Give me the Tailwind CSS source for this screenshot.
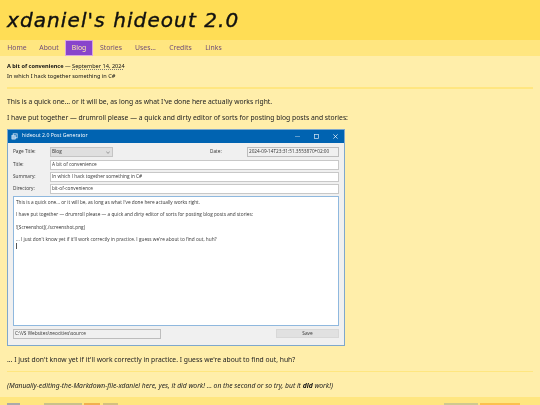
<!DOCTYPE html>
<html><head><meta charset="utf-8"><script src="https://cdn.jsdelivr.net/npm/@tailwindcss/browser@4"></script></head>
<body class="bg-[#ffeeaa] overflow-hidden font-['Noto_Sans',sans-serif] text-[#222]">
<div class="w-[540px] h-[405px] overflow-hidden flex flex-col blur-[0.3px]">
<header class="h-[40px] shrink-0 bg-[#ffdd55] pl-[7px] pt-[5px]"><h1 class="text-[#111] italic text-[20px] leading-[30px] tracking-[1.1px] [-webkit-text-stroke:0.4px_#111] font-['DejaVu_Sans',sans-serif] font-normal">xdaniel's hideout 2.0</h1></header>
<nav class="shrink-0 h-[16px] flex bg-[#ffe680] text-[6.8px] text-[#6f4d78] pl-[1px]">
<a class="w-[32px] flex items-center justify-center">Home</a>
<a class="w-[32px] flex items-center justify-center">About</a>
<a class="w-[28px] flex items-center justify-center bg-[#8844cc] text-[#ffeeaa] border border-[#d9a5e0]">Blog</a>
<a class="w-[36px] flex items-center justify-center">Stories</a>
<a class="w-[33px] flex items-center justify-center">Uses...</a>
<a class="w-[37px] flex items-center justify-center">Credits</a>
<a class="w-[29px] flex items-center justify-center">Links</a>
</nav>
<main class="flex-1 px-[7px] pt-[5px]">
<div class="text-[5.6px] leading-[10px] text-[#111]"><b class="font-bold">A bit of convenience</b> — <span class="underline decoration-dotted decoration-[#777]">September 14, 2024</span></div>
<div class="text-[5.6px] leading-[10px] text-[#111]">In which I hack together something in C#</div>
<hr class="border-0 h-[1.5px] bg-[#ffe680] mt-[6px] mb-[7px]">
<p class="text-[6.75px] leading-[12px] mb-[4px]">This is a quick one... or it will be, as long as what I've done here actually works right.</p>
<p class="text-[6.75px] leading-[12px] mb-[5px]">I have put together — drumroll please — a quick and dirty editor of sorts for posting blog posts and stories:</p>
<div class="w-[338px] h-[217px] bg-[#f0f0f0] border border-[#7fa8cc] flex flex-col font-['Open_Sans',sans-serif] text-[#333] text-[4.75px]">
<div class="h-[13px] shrink-0 bg-[#0063b1] text-white flex items-center pl-[3px]">
<svg width="7" height="7" viewBox="0 0 8 8" class="mr-[4px]"><rect x="2.5" y="1" width="4.5" height="4.5" fill="none" stroke="#cfe3f5"/><rect x="1" y="3" width="4" height="4" fill="#9cc3e6" stroke="#e8f1fa" stroke-width=".6"/></svg>
<span class="text-[5.2px]">hideout 2.0 Post Generator</span>
<div class="ml-auto flex items-center gap-[14px] pr-[6px]">
<svg width="5" height="5" viewBox="0 0 5 5"><path d="M0 2.5H5" stroke="#9fc3e0" stroke-width=".6"/></svg>
<svg width="5" height="5" viewBox="0 0 5 5"><rect x=".4" y=".4" width="4.2" height="4.2" fill="none" stroke="#dbe9f5" stroke-width=".7"/></svg>
<svg width="5" height="5" viewBox="0 0 5 5"><path d="M.4.4 4.6 4.6M4.6.4.4 4.6" stroke="#fff" stroke-width=".7"/></svg>
</div>
</div>
<div class="flex-1 flex flex-col pl-[5px] pr-[5px] pt-[4px]">
<div class="flex h-[11px] items-center">
<span class="w-[37px]">Page Title:</span>
<div class="w-[63px] h-[10px] bg-[#dfdfdf] border border-[#c4c4c4] flex items-center px-[1px]">Blog<svg width="4" height="3" viewBox="0 0 4 3" class="ml-auto mr-[1px]"><path d="M.3.5 2 2.4 3.7.5" fill="none" stroke="#555" stroke-width=".5"/></svg></div>
<span class="ml-[97px] w-[37px]">Date:</span>
<div class="flex-1 h-[10px] bg-[#f0f0f0] border border-[#bdbdbd] flex items-center px-[1px] text-[4.7px] whitespace-nowrap overflow-hidden">2024-09-14T23:31:51.3553870+02:00</div>
</div>
<div class="flex h-[10px] items-center mt-[2px]"><span class="w-[37px]">Title:</span><div class="flex-1 h-[10px] bg-white border border-[#c8c8c8] flex items-center px-[1px]">A bit of convenience</div></div>
<div class="flex h-[10px] items-center mt-[2px]"><span class="w-[37px]">Summary:</span><div class="flex-1 h-[10px] bg-white border border-[#c8c8c8] flex items-center px-[1px]">In which I hack together something in C#</div></div>
<div class="flex h-[10px] items-center mt-[2px]"><span class="w-[37px]">Directory:</span><div class="flex-1 h-[10px] bg-white border border-[#c8c8c8] flex items-center px-[1px]">bit-of-convenience</div></div>
<div class="h-[130px] mt-[2px] bg-white border border-[#8fb8de] px-[2px] pt-[2px] leading-[6.4px]">
<div>This is a quick one... or it will be, as long as what I've done here actually works right.</div>
<div class="mt-[6.2px]">I have put together — drumroll please — a quick and dirty editor of sorts for posting blog posts and stories:</div>
<div class="mt-[6.2px]">![Screenshot](./screenshot.png)</div>
<div class="mt-[6.2px]">... I just don't know yet if it'll work correctly in practice. I guess we're about to find out, huh?</div>
<div class="w-[0.6px] h-[6px] bg-[#555]"></div>
</div>
<div class="flex items-center mt-[3px] h-[10px]">
<div class="w-[148px] h-[10px] border border-[#bdbdbd] flex items-center px-[1px]">C:\VS Websites\neocities\source</div>
<div class="ml-auto w-[63px] h-[9px] bg-[#e1e1e1] border border-[#d8d8d8] flex items-center justify-center">Save</div>
</div>
</div>
</div>
<p class="text-[6.75px] leading-[12px] mt-[8px]">... I just don't know yet if it'll work correctly in practice. I guess we're about to find out, huh?</p>
<hr class="border-0 h-[1.5px] bg-[#ffe680] mt-[5px] mb-[8px]">
<p class="text-[6.75px] leading-[12px] italic">(Manually-editing-the-Markdown-file-xdaniel here, yes, it did work! ... on the second or so try, but it <b class="text-[#111]">did</b> work!)</p>
</main>
<footer class="h-[8px] shrink-0 bg-[#ffe680] relative">
<div class="absolute top-[6px] left-[7px] w-[13px] h-[2px] bg-[#aaa]"></div>
<div class="absolute top-[6px] left-[44px] w-[38px] h-[2px] bg-[#c9c28a]"></div>
<div class="absolute top-[6px] left-[84px] w-[16px] h-[2px] bg-[#f0b050]"></div>
<div class="absolute top-[6px] left-[103px] w-[15px] h-[2px] bg-[#d4c080]"></div>
<div class="absolute top-[6px] left-[444px] w-[34px] h-[2px] bg-[#cfc98f]"></div>
<div class="absolute top-[6px] left-[480px] w-[40px] h-[2px] bg-[#fbc04f]"></div>
</footer>
</div>
</body></html>
